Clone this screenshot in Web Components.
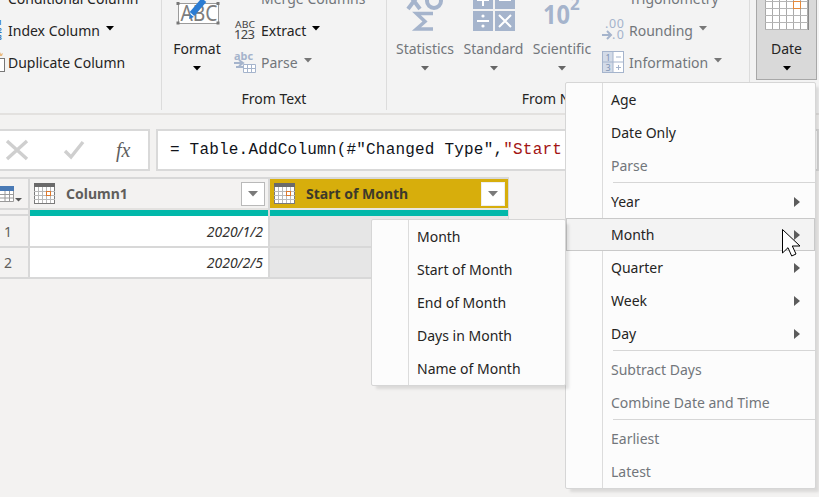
<!DOCTYPE html>
<html>
<head>
<meta charset="utf-8">
<title>Power Query - Date menu</title>
<style>
  html, body { margin: 0; padding: 0; }
  body {
    width: 819px; height: 497px; overflow: hidden; position: relative;
    background: #f3f2f1; color: #252423;
    font-family: "Noto Sans", "Open Sans", sans-serif; font-size: 14px;
  }
  #shift-left { margin-left: -19px; }
  #small-text { margin-left: 2px; }
  #small-num { margin-left: 2px; }
  #date-menu { left: 565px; top: 82px; width: 249px; }
  #month-menu { left: 371px; top: 219px; width: 193px; }
</style>
</head>
<body>

<pq-ribbon>
  <pq-group width="162">
    <pq-stack id="shift-left">
      <pq-small icon="conditional">Conditional Column</pq-small>
      <pq-small icon="index" caret>Index Column</pq-small>
      <pq-small icon="duplicate">Duplicate Column</pq-small>
    </pq-stack>
  </pq-group>
  <pq-group width="225" label="From Text">
    <pq-large icon="format" width="70" caret>Format</pq-large>
    <pq-stack id="small-text">
      <pq-small icon="merge" disabled>Merge Columns</pq-small>
      <pq-small icon="extract" caret>Extract</pq-small>
      <pq-small icon="parse" caret disabled>Parse</pq-small>
    </pq-stack>
  </pq-group>
  <pq-group width="363" label="From Number">
    <pq-large icon="statistics" width="76" caret disabled>Statistics</pq-large>
    <pq-large icon="standard" width="61" caret disabled>Standard</pq-large>
    <pq-large icon="scientific" width="76" caret disabled>Scientific</pq-large>
    <pq-stack id="small-num">
      <pq-small icon="trig" caret disabled>Trigonometry</pq-small>
      <pq-small icon="rounding" caret disabled>Rounding</pq-small>
      <pq-small icon="information" caret disabled>Information</pq-small>
    </pq-stack>
  </pq-group>
  <pq-group width="70" pad="6" last>
    <pq-large icon="date" width="61" caret active>Date</pq-large>
  </pq-group>
</pq-ribbon>

<pq-formula>= Table.AddColumn(#"Changed Type", <b>"Start of Month", each Date.StartOfMonth([Column1]), type date)</b></pq-formula>

<pq-grid>
  <pq-corner></pq-corner>
  <pq-col-head>Column1</pq-col-head>
  <pq-col-head selected>Start of Month</pq-col-head>

  <pq-rownum>1</pq-rownum>
  <pq-cell>2020/1/2</pq-cell>
  <pq-cell shaded></pq-cell>

  <pq-rownum short>2</pq-rownum>
  <pq-cell short>2020/2/5</pq-cell>
  <pq-cell short shaded></pq-cell>
</pq-grid>

<pq-menu id="date-menu">
  <pq-item>Age</pq-item>
  <pq-item>Date Only</pq-item>
  <pq-item disabled>Parse</pq-item>
  <pq-sep></pq-sep>
  <pq-item arrow>Year</pq-item>
  <pq-item arrow hover>Month</pq-item>
  <pq-item arrow>Quarter</pq-item>
  <pq-item arrow>Week</pq-item>
  <pq-item arrow>Day</pq-item>
  <pq-sep></pq-sep>
  <pq-item disabled>Subtract Days</pq-item>
  <pq-item disabled>Combine Date and Time</pq-item>
  <pq-sep></pq-sep>
  <pq-item disabled>Earliest</pq-item>
  <pq-item disabled>Latest</pq-item>
</pq-menu>

<pq-menu id="month-menu">
  <pq-item>Month</pq-item>
  <pq-item>Start of Month</pq-item>
  <pq-item>End of Month</pq-item>
  <pq-item>Days in Month</pq-item>
  <pq-item>Name of Month</pq-item>
</pq-menu>

<pq-cursor></pq-cursor>

<script>
(function () {
  var BLUE = '#a5b4cc';
  var TEXT = '#252423';
  var MUTED = '#72767b';
  var SANS = 'font-family="Noto Sans,sans-serif"';

  // calendar used in the column headers
  function calendar(w, h) {
    var grid = '';
    for (var x = 4; x < 20; x += 4) grid += '<path d="M' + (x + .5) + ' 4V20" stroke="#b9b9b9"/>';
    for (var y = 8; y < 20; y += 4) grid += '<path d="M0 ' + (y + .5) + 'H21" stroke="#b9b9b9"/>';
    return '<svg width="' + w + '" height="' + h + '" viewBox="0 0 21 21">' +
      '<rect x=".5" y=".5" width="20" height="20" fill="#fff" stroke="#7a7a7a"/>' +
      '<rect width="21" height="4" fill="#6a6a6a"/>' + grid +
      '<rect x="12.5" y="8.5" width="4" height="4" fill="#fff" stroke="#e0782a"/>' +
      '</svg>';
  }

  function dateGrid() {
    var s = '';
    for (var x = 0; x <= 6; x++) s += '<path d="M' + (x * 7 + .5) + ' -8V30" stroke="#a9a9a9"/>';
    for (var y = 2; y <= 30; y += 7) s += '<path d="M0 ' + (y + .5) + 'H43" stroke="#b5b5b5"/>';
    return s;
  }

  var SMALL_ICONS = {
    conditional: '<rect x="15" y="-6" width="7" height="12" fill="#fff" stroke="#777"/>',
    index: '<g ' + SANS + ' font-size="6.5" font-weight="700" fill="#2f74b8">' +
      '<text x="17" y="6">1</text><text x="17" y="13.5">2</text><text x="17" y="20.5">3</text></g>',
    duplicate: '<path d="M19 1l1 2 2-1-1 3h-3l-1-3z" fill="#e8b980"/>' +
      '<rect x="18.5" y="7.5" width="5" height="13" fill="#fff" stroke="#777"/>',
    merge: '<path d="M1 0V8H22V0" fill="#dfe5ef" stroke="' + BLUE + '"/><rect x="7" y="0" width="9" height="7" fill="' + BLUE + '"/>',
    extract: '<text x="1" y="9" ' + SANS + ' font-size="9.5" textLength="20" lengthAdjust="spacingAndGlyphs" fill="#444">ABC</text>' +
      '<text x="0" y="20" ' + SANS + ' font-size="13" textLength="21" lengthAdjust="spacing" fill="#444">123</text>',
    parse: '<text x="0" y="9" ' + SANS + ' font-size="11" font-weight="700" textLength="19" lengthAdjust="spacingAndGlyphs" fill="' + BLUE + '">abc</text>' +
      '<path d="M0 12H9M5 9l4 3-4 3M2 16H9" fill="none" stroke="' + BLUE + '" stroke-width="2"/>' +
      '<path d="M9.5 13.5H21.5V21.5H9.5zM9.5 17.5H21.5M13.5 13.5V21.5M17.5 13.5V21.5" fill="#fff" stroke="' + BLUE + '"/>',
    trig: '<path d="M0 8L10 -3V8zM10.5 2H21.5V8.5H10.5zM16 2V8" fill="none" stroke="' + BLUE + '"/>',
    rounding: '<text x="3" y="9" ' + SANS + ' font-size="12.5" textLength="19" fill="' + BLUE + '">.00</text>' +
      '<text x="10" y="20" ' + SANS + ' font-size="12.5" textLength="12" fill="' + BLUE + '">.0</text>' +
      '<path d="M0 16H8M5 12l4 4-4 4" fill="none" stroke="' + BLUE + '" stroke-width="2"/>',
    information: '<rect x=".5" y=".5" width="21" height="21" fill="#fff" stroke="' + BLUE + '"/>' +
      '<rect x="1" y="1" width="10" height="20" fill="#d3dbe8"/>' +
      '<path d="M.5 11H21.5M11 .5V21.5M14 6H19M14 16.5H19M16.5 14V19" fill="none" stroke="' + BLUE + '"/>' +
      '<text x="3.5" y="9.5" ' + SANS + ' font-size="9" fill="#7f93b3">1</text>' +
      '<text x="3.5" y="20" ' + SANS + ' font-size="9" fill="#7f93b3">3</text>'
  };

  var LARGE_ICONS = {
    format: '<rect x="3.5" y="4.5" width="40" height="20" fill="#fff" stroke="#9b9b9b"/>' +
      '<path d="M1.5 3h3v3h-3zM41.5 3h3v3h-3zM1.5 22.5h3v3h-3zM41.5 22.5h3v3h-3z" fill="#777"/>' +
      '<text x="24" y="22" ' + SANS + ' font-size="21" text-anchor="middle" textLength="37" lengthAdjust="spacingAndGlyphs" fill="#7d7d7d">ABC</text>' +
      '<path d="M17 15L29 1" stroke="#2b7cd3" stroke-width="6"/>' +
      '<path d="M14 20l1-5 4 3z" fill="#2b7cd3"/>',
    statistics: '<g fill="none" stroke="' + BLUE + '" stroke-width="4">' +
      '<path d="M5 -6L17 10M17 -6L5 10"/><ellipse cx="31" cy="2" rx="7" ry="7"/>' +
      '<path d="M30 14.5H13.5L22 22.5L13.5 30H30" stroke-width="3.5"/></g>',
    standard: '<path d="M1 -14h20v24H1zM23 -14h20v24H23zM1 12h20v20H1zM23 12h20v20H23z" fill="' + BLUE + '"/>' +
      '<g stroke="#fff" stroke-width="2" fill="none"><path d="M5 22H17M27 16L39 28M39 16L27 28M27 1H39M11 -5V7M5 1H17"/></g>' +
      '<circle cx="11" cy="17" r="1.6" fill="#fff"/><circle cx="11" cy="27" r="1.6" fill="#fff"/>',
    scientific: '<text x="3" y="24.5" ' + SANS + ' font-size="27" font-weight="700" textLength="27" lengthAdjust="spacingAndGlyphs" fill="' + BLUE + '">10</text>' +
      '<text x="30" y="11" ' + SANS + ' font-size="17" font-weight="700" fill="' + BLUE + '">2</text>',
    date: '<rect x=".5" y="-8" width="43" height="38.5" fill="#fff" stroke="#8a8a8a"/>' + dateGrid() +
      '<rect x="28.5" y="2.5" width="7" height="7" fill="#fff" stroke="#e58a3c"/>'
  };

  function caret(color) {
    return '<svg class="caret" width="8" height="5" viewBox="0 0 8 5"><path d="M0 0H8L4 4.5z" fill="' + color + '"/></svg>';
  }

  class PqRibbon extends HTMLElement {
    connectedCallback() {
      this.attachShadow({ mode: 'open' }).innerHTML =
        '<style>:host{display:flex;height:113px;overflow:hidden;background:#f3f3f3;' +
        'border-bottom:2px solid #e3e1df;}</style><slot></slot>';
    }
  }

  class PqGroup extends HTMLElement {
    connectedCallback() {
      var w = this.getAttribute('width');
      var pad = this.getAttribute('pad') || 0;
      var border = this.hasAttribute('last') ? '' : 'border-right:1px solid #dcdcdc;';
      this.attachShadow({ mode: 'open' }).innerHTML =
        '<style>:host{display:flex;flex:none;flex-direction:column;box-sizing:border-box;height:110px;' +
        'width:' + w + 'px;' + border + '}' +
        '.body{display:flex;align-items:flex-end;height:78px;margin-bottom:10px;padding-left:' + pad + 'px;}' +
        '.label{height:22px;line-height:22px;text-align:center;color:' + TEXT + ';white-space:nowrap;}</style>' +
        '<div class="body"><slot></slot></div><div class="label">' + (this.getAttribute('label') || '') + '</div>';
    }
  }

  class PqStack extends HTMLElement {
    connectedCallback() {
      this.attachShadow({ mode: 'open' }).innerHTML =
        '<style>:host{display:flex;flex-direction:column;flex:none;}</style><slot></slot>';
    }
  }

  class PqSmall extends HTMLElement {
    connectedCallback() {
      var off = this.hasAttribute('disabled');
      var icon = SMALL_ICONS[this.getAttribute('icon')] || '';
      this.attachShadow({ mode: 'open' }).innerHTML =
        '<style>:host{display:flex;align-items:center;gap:5px;height:32px;white-space:nowrap;' +
        'color:' + (off ? MUTED : TEXT) + ';}' +
        'svg.i{overflow:visible;flex:none;}.caret{margin-left:1px;margin-bottom:3px;}</style>' +
        '<svg class="i" width="22" height="22" viewBox="0 0 22 22">' + icon + '</svg>' +
        '<span><slot></slot></span>' +
        (this.hasAttribute('caret') ? caret(off ? '#777' : '#000') : '');
    }
  }

  class PqLarge extends HTMLElement {
    connectedCallback() {
      var off = this.hasAttribute('disabled');
      var active = this.hasAttribute('active');
      var icon = LARGE_ICONS[this.getAttribute('icon')] || '';
      this.attachShadow({ mode: 'open' }).innerHTML =
        '<style>:host{display:flex;flex:none;flex-direction:column;align-items:center;box-sizing:border-box;' +
        'width:' + this.getAttribute('width') + 'px;color:' + (off ? MUTED : TEXT) + ';' +
        (active ? 'background:#d9d9d9;border:1px solid #a8a8a8;border-top:0;margin-bottom:-2px;height:100px;justify-content:flex-end;padding-bottom:1px;' : '') + '}' +
        'svg.i{overflow:visible;display:block;margin-bottom:8px;}' +
        '.t{height:20px;line-height:20px;white-space:nowrap;}' +
        '.c{height:19px;display:flex;align-items:center;justify-content:center;}</style>' +
        '<svg class="i" width="44" height="32" viewBox="0 0 44 32">' + icon + '</svg>' +
        '<div class="t"><slot></slot></div>' +
        '<div class="c">' + caret(off ? '#666' : '#000') + '</div>';
    }
  }

  class PqFormula extends HTMLElement {
    connectedCallback() {
      this.attachShadow({ mode: 'open' }).innerHTML =
        '<style>:host{display:flex;gap:6px;margin:14px 0 6px -2px;height:42px;}' +
        '.box{box-sizing:border-box;background:#fff;border:2px solid #d9d9d9;display:flex;align-items:center;}' +
        '.btns{flex:none;width:152px;position:relative;}' +
        '.btns svg{flex:none;}' +
        '.fx{font:italic 20px "Liberation Serif",serif;color:#5f5f5f;margin-left:31px;}' +
        '.text{flex:1;min-width:0;overflow:hidden;white-space:nowrap;padding-left:12px;' +
        'font:16px "Liberation Mono",monospace;letter-spacing:.2px;color:#10131a;}' +
        '::slotted(b){font-weight:400;color:#a31515;}</style>' +
        '<div class="box btns">' +
        '<svg style="margin-left:5px" width="24" height="22" viewBox="0 0 24 22"><path d="M2 2L22 20M22 2L2 20" stroke="#cfcfcf" stroke-width="3.4" fill="none"/></svg>' +
        '<svg style="margin-left:34px" width="22" height="20" viewBox="0 0 22 20"><path d="M2 11L8 17L20 2" stroke="#cfcfcf" stroke-width="3.4" fill="none"/></svg>' +
        '<span class="fx">fx</span></div>' +
        '<div class="box text"><slot></slot></div>';
    }
  }

  class PqGrid extends HTMLElement {
    connectedCallback() {
      this.attachShadow({ mode: 'open' }).innerHTML =
        '<style>:host{display:grid;grid-template-columns:28px 238px 238px;column-gap:2px;' +
        'width:509px;padding-top:2px;padding-right:1px;box-sizing:border-box;background:#d8d8d8;}</style><slot></slot>';
    }
  }

  class PqCorner extends HTMLElement {
    connectedCallback() {
      this.attachShadow({ mode: 'open' }).innerHTML =
        '<style>:host{display:block;height:37px;box-sizing:border-box;background:#f3f2f1;' +
        'border-bottom:2px solid #d8d8d8;overflow:hidden;}' +
        '.top{height:29px;border-bottom:2px solid #d8d8d8;box-sizing:content-box;display:flex;align-items:center;}</style>' +
        '<div class="top"><svg width="24" height="18" viewBox="0 0 24 18">' +
        '<path d="M0 2.5H13.5V16.5H0M0 9.5H13.5M0 13H13.5M5 6V16.5M9.5 6V16.5" fill="#fff" stroke="#9a9a9a"/>' +
        '<rect width="14" height="5" y="1" fill="#4a7ab5"/><path d="M15 13H22L18.5 16.5z" fill="#555"/></svg></div>';
    }
  }

  class PqColHead extends HTMLElement {
    connectedCallback() {
      var sel = this.hasAttribute('selected');
      this.attachShadow({ mode: 'open' }).innerHTML =
        '<style>:host{display:block;height:37px;background:#f3f2f1;}' +
        '.top{height:29px;box-sizing:border-box;display:flex;align-items:center;gap:11px;padding:0 3px 0 4px;' +
        'background:' + (sel ? '#d7ae0c' : '#f3f2f1') + ';color:' + (sel ? '#3d3a2a' : '#605e5c') + ';font-weight:700;}' +
        '.name{flex:1;white-space:nowrap;}' +
        '.filter{flex:none;box-sizing:border-box;width:24px;height:24px;background:#fff;border:1px solid ' + (sel ? '#eee' : '#b9b9b9') + ';' +
        'display:flex;align-items:center;justify-content:center;}' +
        '.line{height:2px;background:' + (sel ? '#e8e6e0' : '#e3e2e0') + ';}' +
        '.teal{height:6px;background:#01b8aa;}</style>' +
        '<div class="top">' + calendar(21, 21) +
        '<span class="name"><slot></slot></span>' +
        '<span class="filter"><svg width="10" height="6" viewBox="0 0 10 6"><path d="M0 0H10L5 5.5z" fill="#7a7a7a"/></svg></span></div>' +
        '<div class="line"></div><div class="teal"></div>';
    }
  }

  class PqRownum extends HTMLElement {
    connectedCallback() {
      this.attachShadow({ mode: 'open' }).innerHTML =
        '<style>:host{display:flex;align-items:center;box-sizing:border-box;padding-left:4px;height:' +
        (this.hasAttribute('short') ? 31 : 32) + 'px;background:#f3f2f1;border-bottom:2px solid #d8d8d8;color:#605e5c;}</style><slot></slot>';
    }
  }

  class PqCell extends HTMLElement {
    connectedCallback() {
      this.attachShadow({ mode: 'open' }).innerHTML =
        '<style>:host{display:flex;align-items:center;justify-content:flex-end;box-sizing:border-box;padding-right:5px;height:' +
        (this.hasAttribute('short') ? 31 : 32) + 'px;background:' + (this.hasAttribute('shaded') ? '#e6e6e6' : '#fff') +
        ';border-bottom:2px solid #d8d8d8;font-style:italic;color:#323130;}</style><slot></slot>';
    }
  }

  class PqMenu extends HTMLElement {
    connectedCallback() {
      this.attachShadow({ mode: 'open' }).innerHTML =
        '<style>:host{display:block;position:absolute;background:#fcfcfc linear-gradient(#dcdcdc,#dcdcdc) 36px 0/1px 100% no-repeat;' +
        'border:1px solid #d6d6d6;border-radius:2px;box-shadow:4px 4px 3px -1px rgba(0,0,0,.1);}</style><slot></slot>';
    }
  }

  class PqItem extends HTMLElement {
    connectedCallback() {
      var off = this.hasAttribute('disabled');
      var hover = this.hasAttribute('hover');
      this.attachShadow({ mode: 'open' }).innerHTML =
        '<style>:host{display:flex;align-items:center;justify-content:space-between;box-sizing:border-box;height:33px;' +
        'padding:0 15px 0 45px;white-space:nowrap;color:' + (off ? MUTED : TEXT) + ';' +
        (hover ? 'background:#f3f3f3;box-shadow:inset 0 0 0 1px #c9c9c9;' : '') + '}</style>' +
        '<span><slot></slot></span>' +
        (this.hasAttribute('arrow') ? '<svg width="6" height="10" viewBox="0 0 6 10"><path d="M0 0L6 5L0 10z" fill="#5c5c5c"/></svg>' : '');
    }
  }

  class PqSep extends HTMLElement {
    connectedCallback() {
      this.attachShadow({ mode: 'open' }).innerHTML =
        '<style>:host{display:block;height:3px;margin-left:47px;box-sizing:border-box;}' +
        'div{height:1px;background:#d6d6d6;}</style><div></div>';
    }
  }

  class PqCursor extends HTMLElement {
    connectedCallback() {
      this.attachShadow({ mode: 'open' }).innerHTML =
        '<style>:host{display:block;position:absolute;left:782px;top:229px;width:19px;height:28px;}</style>' +
        '<svg width="19" height="28" viewBox="0 0 19 28"><path d="M.5 .5V24L6 18.7L9.7 27L14 25L10.3 17H18z" fill="#fff" stroke="#000"/></svg>';
    }
  }

  customElements.define('pq-ribbon', PqRibbon);
  customElements.define('pq-group', PqGroup);
  customElements.define('pq-stack', PqStack);
  customElements.define('pq-small', PqSmall);
  customElements.define('pq-large', PqLarge);
  customElements.define('pq-formula', PqFormula);
  customElements.define('pq-grid', PqGrid);
  customElements.define('pq-corner', PqCorner);
  customElements.define('pq-col-head', PqColHead);
  customElements.define('pq-rownum', PqRownum);
  customElements.define('pq-cell', PqCell);
  customElements.define('pq-menu', PqMenu);
  customElements.define('pq-item', PqItem);
  customElements.define('pq-sep', PqSep);
  customElements.define('pq-cursor', PqCursor);
})();
</script>
</body>
</html>
